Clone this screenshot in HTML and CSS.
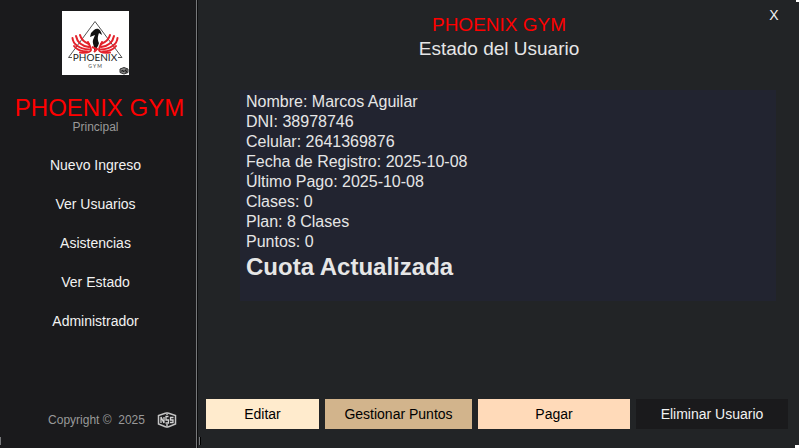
FILE: index.html
```html
<!DOCTYPE html>
<html lang="es">
<head>
<meta charset="utf-8">
<meta name="viewport" content="width=device-width, initial-scale=1">
<title>Phoenix Gym - Estado del Usuario</title>
<link rel="stylesheet" href="styles.css">
</head>
<body>
<div class="app">
  <aside class="sidebar">
    <svg class="logo" viewBox="0 0 67 64" role="img" aria-label="Phoenix Gym">
      <rect width="67" height="64" fill="#fff"/>
      <path d="M10 46.500 H6.500 L33 10.500 L60 46.500 H56" fill="none" stroke="#555" stroke-width="1"/>
      <g id="wing" fill="none" stroke="#e3222b" stroke-width="2" stroke-linecap="round">
        <path d="M18 24 C19 28 22 31 27 33"/>
        <path d="M14 25 C15 30 19 35 27 36"/>
        <path d="M10.500 27 C11 33 17 38 27 38.500"/>
        <path d="M12 35 C15 39 20 40.500 25 40.500"/>
        <path d="M18 41.500 C22 42 28 42 29 39 C29 36 27 34 26 31"/>
      </g>
      <use href="#wing" transform="matrix(-1 0 0 1 66 0)"/>
      <path d="M29 22 L32 19 C36 16 39 19 40 24 L37 22 C35 27 36 30 37 32 C36 36 34 38 32 40 C33 35 30 33 31 29 L33 24 L28 26Z" fill="#111"/>
      <path d="M30 36 L35 38 L32 41" fill="none" stroke="#e3222b" stroke-width="2"/>
      <text class="logo-name" x="33" y="50" text-anchor="middle">PHOENIX</text>
      <text class="logo-gym" x="33" y="57" text-anchor="middle">G Y M</text>
      <path d="M58 58 L62 56.500 L66 58 V61.500 L62 63 L58 61.500Z" fill="#888" stroke="#333"/>
      <path d="M60 61 V59 L62 61 V59 M65 59 H63 L65 61 H63" fill="none" stroke="#222" stroke-width="1"/>
    </svg>
    <div class="brand">PHOENIX GYM</div>
    <div class="section">Principal</div>
    <nav class="menu">
      <a href="#nuevo">Nuevo Ingreso</a>
      <a href="#usuarios">Ver Usuarios</a>
      <a href="#asistencias">Asistencias</a>
      <a href="#estado">Ver Estado</a>
      <a href="#administrador">Administrador</a>
    </nav>
    <footer class="footer">
      <span class="copyright">Copyright ©&nbsp; 2025</span>
      <svg class="nss" viewBox="0 0 20 16" role="img" aria-label="NSS">
        <path d="M9 1 L1.500 3.500 V12 L9 15 M11 1 L18.500 3.500 V12 L11 15 M10 0 V3 M10 12 V16" fill="none" stroke="#c4c4c4" stroke-width="1.500"/>
        <path d="M4 11 V5 L7 11 V5 M11.500 4.500 H9 V8 H11.500 V11 H8.500 M16.500 5.500 H13.500 V8 H16 V10.500 H13" fill="none" stroke="#d4d4d4" stroke-width="1.300"/>
      </svg>
    </footer>
  </aside>
  <main class="main">
    <button class="close" type="button" aria-label="Cerrar">X</button>
    <header class="heading">
      <div class="title">PHOENIX GYM</div>
      <h1>Estado del Usuario</h1>
    </header>
    <section class="card">
      <p>Nombre: Marcos Aguilar</p>
      <p>DNI: 38978746</p>
      <p>Celular: 2641369876</p>
      <p>Fecha de Registro: 2025-10-08</p>
      <p>Último Pago: 2025-10-08</p>
      <p>Clases: 0</p>
      <p>Plan: 8 Clases</p>
      <p>Puntos: 0</p>
      <h2>Cuota Actualizada</h2>
    </section>
    <div class="actions">
      <button class="edit" type="button">Editar</button>
      <button class="points" type="button">Gestionar Puntos</button>
      <button class="pay" type="button">Pagar</button>
      <button class="delete" type="button">Eliminar Usuario</button>
    </div>
  </main>
</div>
</body>
</html>
```
FILE: styles.css
```css
* {
  box-sizing: border-box;
}

body {
  margin: 0;
  background: #222426;
  color: #e6e6e6;
  font-family: "Liberation Sans", Arial, sans-serif;
}

p, h1, h2 {
  margin: 0;
}

.app {
  display: grid;
  grid-template-columns: 198px 1fr;
  min-height: 100vh;
}

.sidebar {
  position: relative;
  display: flex;
  flex-direction: column;
  align-items: center;
  padding: 11px 6px 16px 0;
  background: #1a1a1c;
  border-right: 1px solid #0c0c0d;
  box-shadow: inset -1px 0 #77787a;
}

/* Window resize grips */
.sidebar::before,
.sidebar::after {
  content: "";
  position: absolute;
  bottom: 3px;
  left: 0;
  width: 1px;
  height: 8px;
  background: #77787a;
}

.sidebar::after {
  left: 199px;
  box-shadow: 1px 0 #000;
}

.logo {
  width: 67px;
  height: 64px;
}

.logo-name {
  font: 10px Lato, sans-serif;
  fill: #222;
}

.logo-gym {
  font: 5px Lato, sans-serif;
  fill: #444;
}

.brand {
  margin: 21px 0 0 8px;
  color: #f00;
  font-size: 24px;
  line-height: 24px;
  white-space: nowrap;
}

.section {
  color: #999;
  font-size: 12px;
  line-height: 14px;
}

.menu {
  display: flex;
  flex-direction: column;
  align-items: center;
  margin-top: 12px;
}

.menu a {
  color: #f2f2f2;
  font-size: 14px;
  line-height: 39px;
  text-decoration: none;
}

.footer {
  display: flex;
  align-items: center;
  gap: 12px;
  margin-top: auto;
  padding-left: 34px;
  color: #999;
  font-size: 12px;
  line-height: 24px;
}

.nss {
  width: 20px;
  height: 16px;
}

.main {
  position: relative;
  display: flex;
  flex-direction: column;
  padding: 13px 11px 19px 8px;
}

.main::before,
.main::after {
  content: "";
  position: absolute;
  top: 0;
  right: 0;
  width: 3px;
  height: 2px;
  background: #fff;
}

.main::after {
  top: auto;
  bottom: 0;
  width: 4px;
  height: 3px;
}

button {
  border: 0;
  padding: 0;
  color: #000;
  font: 14px "Liberation Sans", Arial, sans-serif;
}

.close {
  position: absolute;
  top: 3px;
  right: 13px;
  width: 24px;
  height: 24px;
  background: none;
  color: #f2f2f2;
}

.heading {
  padding-left: 4px;
  text-align: center;
  font-size: 19px;
  line-height: 24px;
}

.title {
  color: #f00;
}

h1 {
  font-size: 19px;
  font-weight: 400;
}

.card {
  margin: 29px 12px 0 34px;
  padding: 2px 6px 20px;
  background: #222430;
  font-size: 16px;
  line-height: 20px;
}

h2 {
  font-size: 24px;
  line-height: 29px;
}

.actions {
  display: grid;
  grid-template-columns: 113fr 147fr 152fr 152fr;
  gap: 6px;
  margin-top: auto;
}

.actions button {
  height: 30px;
}

.edit {
  background: #ffebcd;
}

.points {
  background: #d2b48c;
}

.pay {
  background: #ffdab9;
}

.actions .delete {
  background: #1a1a1c;
  color: #f2f2f2;
}
```
